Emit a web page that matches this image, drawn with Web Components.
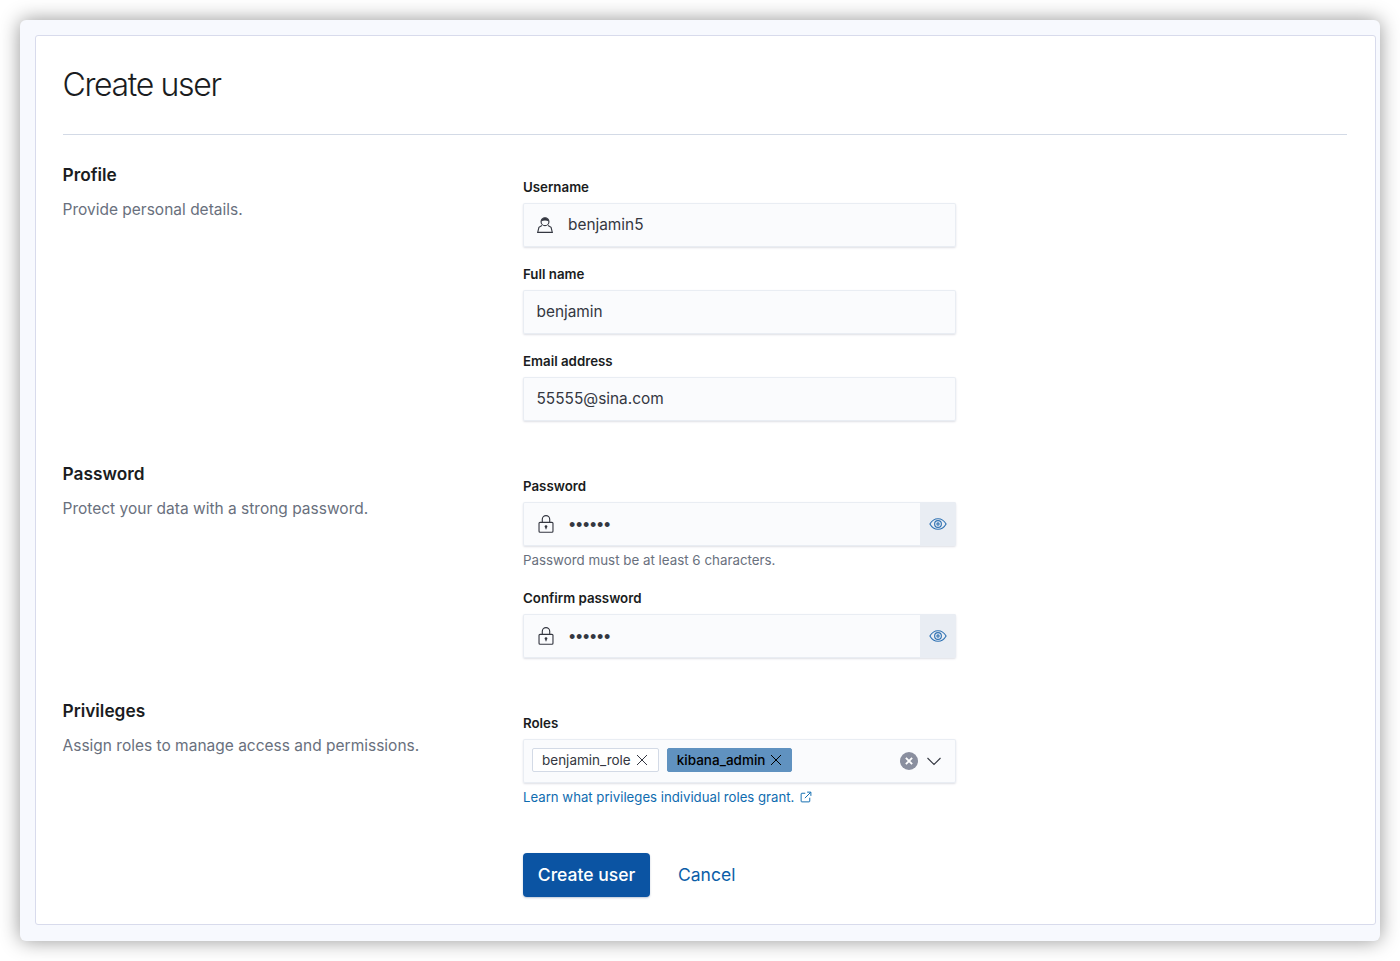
<!DOCTYPE html>
<html lang="en">
<head>
<meta charset="utf-8">
<title>Create user</title>
<style>
  html, body { margin: 0; background: #fff; }
  body { font-family: Inter, "Liberation Sans", sans-serif; color: #343741; overflow: hidden; }
</style>
</head>
<body>
<app-window>
  <page-header>Create user</page-header>

  <form-section heading="Profile" description="Provide personal details.">
    <form-field label="Username"><text-control icon="user">benjamin5</text-control></form-field>
    <form-field label="Full name"><text-control>benjamin</text-control></form-field>
    <form-field label="Email address"><text-control>55555@sina.com</text-control></form-field>
  </form-section>

  <form-section heading="Password" description="Protect your data with a strong password.">
    <form-field label="Password" help="Password must be at least 6 characters."><password-control></password-control></form-field>
    <form-field label="Confirm password"><password-control></password-control></form-field>
  </form-section>

  <form-section heading="Privileges" description="Assign roles to manage access and permissions.">
    <form-field label="Roles">
      <roles-control>
        <role-tag>benjamin_role</role-tag>
        <role-tag selected>kibana_admin</role-tag>
      </roles-control>
      <external-link>Learn what privileges individual roles grant.</external-link>
    </form-field>
  </form-section>

  <form-actions></form-actions>
</app-window>

<script>
// stroke paths for the small icons, all on a 16x16 box
const ICONS = {
  user: `<circle cx="8" cy="5" r="3.500" fill="none"/>
         <path d="M4.500 4.800C5 2.500 6.300 1.500 8 1.500s3 1 3.500 3.300C9.500 3.800 6.500 3.800 4.500 4.800z" fill="currentColor" stroke="none"/>
         <path d="M5.300 8.500 2.600 10 1.500 14.500h13L13.400 10l-2.700-1.500" fill="none"/>`,
  lock: `<rect x="1.800" y="6.500" width="12.400" height="8.800" rx=".9" fill="none"/>
         <path d="M4.700 6.500V3.800a3.300 3.300 0 0 1 6.600 0v2.700" fill="none"/>
         <circle cx="8" cy="10.300" r="1.200" fill="currentColor" stroke="none"/>
         <path d="M8 10.500v2.200" fill="none"/>`,
  eye: `<path d="M.8 8C2.500 5 5 3.300 8 3.300S13.500 5 15.200 8c-1.700 3-4.200 4.700-7.200 4.700S2.500 11 .8 8z" fill="none"/>
        <circle cx="8" cy="8" r="3" fill="none"/>
        <circle cx="8" cy="8" r="1" fill="none"/>`,
  cross: `<path d="M3 3l10 10M13 3 3 13" fill="none"/>`,
  chevron: `<path d="M1.500 5 8 11.500 14.500 5" fill="none"/>`,
  external: `<path d="M7 3H2.500A1 1 0 0 0 1.500 4v9.500a1 1 0 0 0 1 1H12a1 1 0 0 0 1-1V9" fill="none"/>
             <path d="M6.500 9.500 14 2M9.500 1.500h5v5" fill="none"/>`
};

customElements.define("ui-icon", class extends HTMLElement {
  connectedCallback() {
    const size = this.getAttribute("size") || 16;
    const weight = this.getAttribute("weight") || 1;
    this.attachShadow({ mode: "open" }).innerHTML = `
      <style>
        :host { display: inline-flex; flex: none; width: ${size}px; height: ${size}px; }
        svg { width: 100%; height: 100%; display: block; }
      </style>
      <svg viewBox="0 0 16 16" stroke="currentColor" stroke-width="${weight}">${ICONS[this.getAttribute("name")]}</svg>`;
  }
});

customElements.define("app-window", class extends HTMLElement {
  connectedCallback() {
    this.attachShadow({ mode: "open" }).innerHTML = `
      <style>
        :host {
          display: block;
          box-sizing: border-box;
          width: 1360px;
          height: 921px;
          margin: 20px;
          padding: 15px 4px 16px 15px;
          background: #f7f9fe;
          border-radius: 6px;
          box-shadow: 0 0 20px rgba(0, 0, 0, .42);
        }
        .panel {
          box-sizing: border-box;
          height: 100%;
          padding: 0 28.500px 0 26.500px;
          background: #fff;
          border: 1px solid #d8dbec;
          border-radius: 3px;
        }
      </style>
      <div class="panel"><slot></slot></div>`;
  }
});

customElements.define("page-header", class extends HTMLElement {
  connectedCallback() {
    this.attachShadow({ mode: "open" }).innerHTML = `
      <style>
        :host {
          display: block;
          height: 99px;
          box-sizing: border-box;
          padding-top: 29px;
          margin-bottom: 28px;
          border-bottom: 1px solid #d3dae6;
          font-size: 32px;
          line-height: 40px;
          font-weight: 300;
          letter-spacing: -1.350px;
          color: #1a1c21;
        }
      </style>
      <slot></slot>`;
  }
});

customElements.define("form-section", class extends HTMLElement {
  connectedCallback() {
    this.attachShadow({ mode: "open" }).innerHTML = `
      <style>
        :host {
          display: grid;
          grid-template-columns: 460.500px 433px;
          margin-bottom: 41px;
        }
        h2 { margin: 0; font-size: 17.300px; line-height: 24px; font-weight: 600; color: #1a1c21; }
        p { margin: 11px 0 0; font-size: 15.500px; line-height: 24px; color: #69707d; }
        .fields { display: flex; flex-direction: column; gap: 17px; padding-top: 14px; }
      </style>
      <div>
        <h2>${this.getAttribute("heading")}</h2>
        <p>${this.getAttribute("description")}</p>
      </div>
      <div class="fields"><slot></slot></div>`;
  }
});

customElements.define("form-field", class extends HTMLElement {
  connectedCallback() {
    const help = this.getAttribute("help");
    this.attachShadow({ mode: "open" }).innerHTML = `
      <style>
        :host { display: block; }
        label { display: block; margin-bottom: 6px; font-size: 13.300px; line-height: 20px; font-weight: 600; color: #1a1c21; }
        .help { margin: 4px 0 1px; font-size: 13.350px; line-height: 20px; color: #69707d; }
      </style>
      <label>${this.getAttribute("label")}</label>
      <slot></slot>
      ${help ? `<div class="help">${help}</div>` : ""}`;
  }
});

const CONTROL_BOX = `
  box-sizing: border-box;
  height: 44px;
  background: #fafbfd;
  box-shadow: inset 0 0 0 1px #e9edf3, 0 1px 2px rgba(70, 80, 110, .18);
  border-radius: 2px;
  font-size: 15.400px;
  color: #343741;
`;

customElements.define("text-control", class extends HTMLElement {
  connectedCallback() {
    const icon = this.getAttribute("icon");
    this.attachShadow({ mode: "open" }).innerHTML = `
      <style>
        :host { display: flex; align-items: center; ${CONTROL_BOX} padding: 0 0 1px 13.500px; }
        ui-icon { margin: 0 14px 0 -.5px; color: #343741; }
      </style>
      ${icon ? `<ui-icon name="${icon}" size="18"></ui-icon>` : ""}
      <slot></slot>`;
  }
});

customElements.define("password-control", class extends HTMLElement {
  connectedCallback() {
    this.attachShadow({ mode: "open" }).innerHTML = `
      <style>
        :host { display: flex; align-items: center; ${CONTROL_BOX} padding-left: 14px; overflow: hidden; }
        .dots { flex: 1; margin: 2px 0 0 14px; font-family: "Liberation Sans", sans-serif; font-size: 18px; letter-spacing: .7px; color: #343741; }
        .toggle {
          display: flex; align-items: center; justify-content: center;
          width: 36px; height: 44px;
          background: #e9edf3;
          color: #2f72b3;
        }
      </style>
      <ui-icon name="lock" size="18"></ui-icon>
      <span class="dots">••••••</span>
      <span class="toggle"><ui-icon name="eye" size="18"></ui-icon></span>`;
  }
});

customElements.define("role-tag", class extends HTMLElement {
  connectedCallback() {
    this.attachShadow({ mode: "open" }).innerHTML = `
      <style>
        :host {
          display: inline-flex; align-items: center; gap: 3px;
          box-sizing: border-box;
          height: 24px;
          padding: 0 8px 0 9px;
          background: #fff;
          border: 1px solid #d3dae6;
          border-radius: 2px;
          font-size: 13.500px;
          color: #343741;
        }
        :host([selected]) { padding-right: 7px; background: #6092c0; border-color: #6092c0; color: #000; font-weight: 500; }
      </style>
      <slot></slot>
      <ui-icon name="cross" size="16"></ui-icon>`;
  }
});

customElements.define("roles-control", class extends HTMLElement {
  connectedCallback() {
    this.attachShadow({ mode: "open" }).innerHTML = `
      <style>
        :host { display: flex; align-items: center; ${CONTROL_BOX} padding: 0 14px 0 9px; }
        .tags { flex: 1; display: flex; gap: 8px; margin-bottom: 2px; }
        .clear {
          display: flex; align-items: center; justify-content: center;
          width: 18px; height: 18px; margin-right: 8px;
          border-radius: 50%;
          background: #8a8f9f;
          color: #fff;
        }
        ui-icon[name="chevron"] { color: #343741; }
      </style>
      <div class="tags"><slot></slot></div>
      <span class="clear"><ui-icon name="cross" size="10" weight="3"></ui-icon></span>
      <ui-icon name="chevron" size="16" weight="1.100"></ui-icon>`;
  }
});

customElements.define("external-link", class extends HTMLElement {
  connectedCallback() {
    this.attachShadow({ mode: "open" }).innerHTML = `
      <style>
        :host {
          display: flex; align-items: center; gap: 6px;
          margin-top: 4px;
          font-size: 13.200px; line-height: 20px;
          color: #0f6cb0;
        }
      </style>
      <slot></slot>
      <ui-icon name="external" size="12" weight="1.300"></ui-icon>`;
  }
});

customElements.define("form-actions", class extends HTMLElement {
  connectedCallback() {
    this.attachShadow({ mode: "open" }).innerHTML = `
      <style>
        :host { display: flex; align-items: center; gap: 28px; margin: 46px 0 0 460.500px; font-size: 17.500px; }
        .primary {
          display: flex; align-items: center; justify-content: center;
          width: 127px; height: 44px;
          padding-bottom: 1px;
          box-sizing: border-box;
          background: #0b54a3;
          border-radius: 4px;
          font-weight: 500;
          color: #fff;
          box-shadow: 0 1px 2px rgba(40, 70, 120, .3);
        }
        .cancel { color: #0b5ea8; padding-bottom: 1px; }
      </style>
      <span class="primary">Create user</span>
      <span class="cancel">Cancel</span>`;
  }
});
</script>
</body>
</html>
